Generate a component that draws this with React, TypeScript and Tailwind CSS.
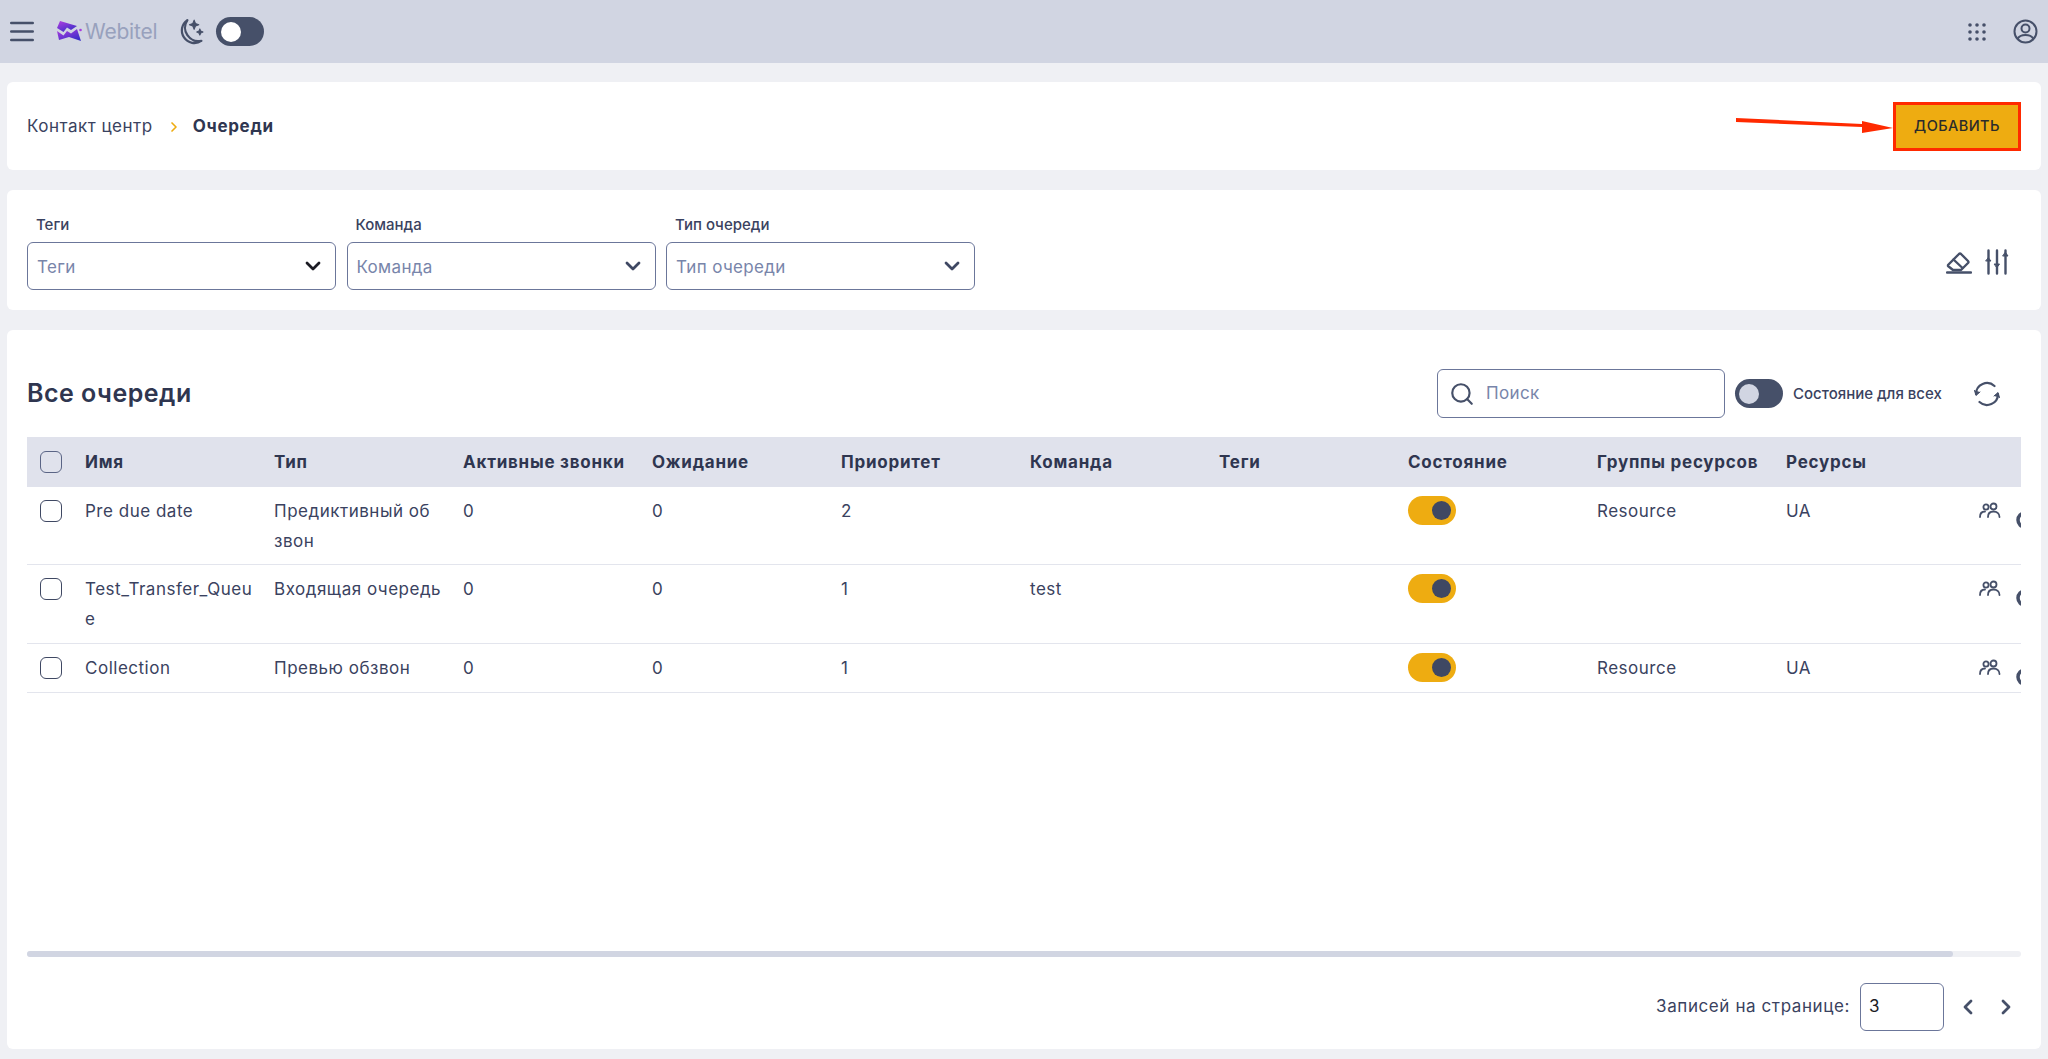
import React from "react";
import { ChevronDown, ChevronLeft, ChevronRight, Search } from "lucide-react";

const font = { fontFamily: "Inter, 'Noto Sans', sans-serif" };

function Toggle({ kind }: { kind: "dark" | "darkMuted" | "yellow" }) {
  if (kind === "yellow")
    return (
      <div className="flex h-[29px] w-[48px] items-center justify-end rounded-full bg-[#eeac11] pr-[5px]">
        <div className="h-[19px] w-[19px] rounded-full bg-[#3f4863]" />
      </div>
    );
  return (
    <div className={`flex items-center rounded-full bg-[#465069] ${kind === "dark" ? "h-[29px] w-[48px] pl-[5px]" : "h-[29px] w-[48px] pl-[4px]"}`}>
      <div className={`h-[20px] w-[20px] rounded-full ${kind === "dark" ? "bg-white" : "bg-[#d1d5e2]"}`} />
    </div>
  );
}

function Field({ label, chevron }: { label: string; chevron: string }) {
  return (
    <div className="flex w-[309px] flex-col">
      <div className="h-[35px] pl-[9px] pt-[25px] text-[15px] font-medium leading-[20px] text-[#3a4260]">{label}</div>
      <div className="mt-[17px] flex h-[48px] items-center justify-between rounded-[6px] border border-[#6b769a] pl-[9px] pr-[10px] text-[17px] tracking-[0.02em] text-[#7885aa]">
        <span className="pt-[3px]">{label}</span>
        <ChevronDown size={24} strokeWidth={2.8} color={chevron} />
      </div>
    </div>
  );
}

function Checkbox({ muted }: { muted?: boolean }) {
  return <div className={`h-[22px] w-[22px] rounded-[6px] border-[1.5px] ${muted ? "border-[#5a6485]" : "border-[#3f4863]"}`} />;
}

function UsersIcon() {
  return (
    <svg width="22" height="18" viewBox="0 0 22 18" fill="none" stroke="#465069" strokeWidth="1.8" strokeLinecap="round">
      <circle cx="7" cy="5" r="2.6" />
      <circle cx="14.5" cy="4.5" r="3" />
      <path d="M1 15c0-3.4 2-5.5 5-5.5" />
      <path d="M9 15c0-3.4 2.2-5.5 5.500-5.500S20.500 11.600 20.500 15" />
    </svg>
  );
}

const cols = "grid grid-cols-[58px_repeat(10,189px)_46px]";

const rows = [
  { name: ["Pre due date"], type: ["Предиктивный об", "звон"], wait: "0", pr: "2", team: "", res: "Resource", ua: "UA", h: "h-[78px]" },
  { name: ["Test_Transfer_Queu", "e"], type: ["Входящая очередь"], wait: "0", pr: "1", team: "test", res: "", ua: "", h: "h-[79px]" },
  { name: ["Collection"], type: ["Превью обзвон"], wait: "0", pr: "1", team: "", res: "Resource", ua: "UA", h: "h-[49px]" },
];

const heads = ["Имя", "Тип", "Активные звонки", "Ожидание", "Приоритет", "Команда", "Теги", "Состояние", "Группы ресурсов", "Ресурсы"];

function Lines({ l }: { l: string[] }) {
  return (
    <div className="whitespace-nowrap">
      {l.map((t) => (
        <div key={t}>{t}</div>
      ))}
    </div>
  );
}

export default function App() {
  return (
    <div style={font} className="relative flex h-[1059px] w-[2048px] flex-col overflow-hidden bg-[#eff0f4] text-[#3a4260]">
      <header className="flex h-[63px] shrink-0 items-center justify-between bg-[#d1d5e2] pl-[10px] pr-[10px]">
        <div className="flex items-center">
          <svg width="24" height="21" viewBox="0 0 24 21" stroke="#465069" strokeWidth="2.4" strokeLinecap="round">
            <path d="M1.200 2h21.600M1.200 10.500h21.600M1.200 19h21.600" />
          </svg>
          <svg className="ml-[22px]" width="26" height="21" viewBox="0 0 26 21">
            <defs>
              <linearGradient id="lg" x1="0" y1="0" x2="0.7" y2="1">
                <stop offset="0" stopColor="#b23fe0" />
                <stop offset="1" stopColor="#3a2ec8" />
              </linearGradient>
            </defs>
            <path d="M4 0 L21 5 L15 9 L11 6.500 L7.500 11 L1 7 Z" fill="url(#lg)" />
            <path d="M1 10 L7.500 14.500 L11 10 L15 12.500 L21 8 L25 20 L13 16 L3 19 Z" fill="url(#lg)" />
            <circle cx="24.500" cy="9" r="1.300" fill="#a93ae0" />
          </svg>
          <span className="ml-[3px] text-[21px] leading-none tracking-[-0.01em] text-[#98a1bd]">Webitel</span>
          <svg className="ml-[20px]" width="27" height="27" viewBox="0 0 26 26" fill="none" stroke="#465069" strokeWidth="2.200" strokeLinecap="round" strokeLinejoin="round">
            <path d="M10 2A12 12 0 1 0 23.500 22 A13 13 0 0 1 10 2Z" />
            <path d="M16.500 2l1.300 3.300 3.200 1.200-3.200 1.200-1.300 3.300-1.300-3.300-3.200-1.200 3.200-1.200Z" fill="#465069" strokeWidth="1" />
            <path d="M22 10.500l.9 2.100 2.100.9-2.100.9-.9 2.100-.9-2.100-2.100-.9 2.100-.9Z" fill="#465069" strokeWidth="1" />
          </svg>
          <div className="ml-[12px]">
            <Toggle kind="dark" />
          </div>
        </div>
        <div className="flex items-center gap-[27px]">
          <svg width="18" height="18" viewBox="0 0 18 18" fill="#465069">
            {[2, 9, 16].flatMap((y) => [2, 9, 16].map((x) => <circle key={`${x}-${y}`} cx={x} cy={y} r="1.800" />))}
          </svg>
          <svg width="25" height="25" viewBox="0 0 25 25" fill="none" stroke="#465069" strokeWidth="2">
            <circle cx="12.500" cy="12.500" r="11" />
            <circle cx="12.500" cy="9.500" r="4" />
            <path d="M4.500 20c1.500-3 4.500-4 8-4s6.500 1 8 4" />
          </svg>
        </div>
      </header>

      <main className="flex flex-1 flex-col gap-[20px] px-[7px] pb-[10px] pt-[19px]">
        <section className="relative flex h-[88px] shrink-0 items-center justify-between rounded-[6px] bg-white pl-[20px] pr-[20px]">
          <div className="flex items-center pt-[2px] text-[17px] tracking-[0.03em]">
            <span>Контакт центр</span>
            <ChevronRight className="ml-[13px] mr-[11px]" size={16} strokeWidth={2.5} color="#eeac11" />
            <span className="font-bold tracking-[0.04em] text-[#2f3650]">Очереди</span>
          </div>
          <button className="flex h-[49px] w-[128px] items-center justify-center border-[3px] border-[#ff2a00] bg-[#eeac11] text-[14.500px] font-medium tracking-[0.03em] text-[#2b2b2b]">
            ДОБАВИТЬ
          </button>
          <svg className="absolute left-[1729px] top-[30px]" width="158" height="24" viewBox="0 0 158 24" fill="#ff2a00">
            <path d="M0 6 L126 12 L126 9 L157 16 L126 21 L126 15 L0 10 Z" />
          </svg>
        </section>

        <section className="flex h-[120px] shrink-0 justify-between rounded-[6px] bg-white px-[20px]">
          <div className="flex gap-[10.500px]">
            <Field label="Теги" chevron="#1c1c24" />
            <Field label="Команда" chevron="#3f4863" />
            <Field label="Тип очереди" chevron="#3f4863" />
          </div>
          <div className="flex items-center gap-[13px] pr-[12px] pt-[24px]">
            <svg width="26" height="24" viewBox="0 0 26 24" fill="none" stroke="#465069" strokeWidth="2.400" strokeLinejoin="round" strokeLinecap="round">
              <path d="M2 15 L13 4 a1.500 1.500 0 0 1 2 0 L22 11 a1.500 1.500 0 0 1 0 2 L15 20 H7 L2 16 Z" />
              <path d="M7.500 9.500 L16.500 18" />
              <path d="M1 22.500 H25" />
            </svg>
            <svg width="24" height="26" viewBox="0 0 24 26" fill="#465069" stroke="#465069" strokeWidth="2.400" strokeLinecap="round">
              <path d="M3.500 1.500v23M12 1.500v23M20.500 1.500v23" />
              <path d="M1 12h5l-2.500-3z" strokeWidth="1" />
              <path d="M9.500 15h5l-2.500 3.500z" strokeWidth="1" />
              <path d="M18 7h5l-2.500-3.500z" strokeWidth="1" />
            </svg>
          </div>
        </section>

        <section className="flex min-h-0 flex-1 flex-col rounded-[6px] bg-white px-[20px]">
          <div className="flex h-[107px] shrink-0 items-center justify-between pt-[20px]">
            <h1 className="text-[25px] font-semibold tracking-[0.02em] text-[#2f3650]">Все очереди</h1>
            <div className="flex items-center">
              <div className="flex h-[49px] w-[288px] items-center rounded-[6px] border border-[#6b769a] pl-[11px]">
                <Search size={26} strokeWidth={2} color="#465069" />
                <span className="ml-[11px] text-[17px] tracking-[0.02em] text-[#7885aa]">Поиск</span>
              </div>
              <div className="ml-[10px]">
                <Toggle kind="darkMuted" />
              </div>
              <span className="ml-[10px] w-[150px] whitespace-nowrap text-[15px] font-medium leading-none text-[#3a4260]">Состояние для всех</span>
              <svg className="ml-[30px] mr-[20px]" width="28" height="28" viewBox="0 0 28 28" fill="none" stroke="#465069" strokeWidth="2.200" strokeLinecap="round">
                <path d="M3 14A11 11 0 0 1 21.500 6" />
                <path d="M25 14A11 11 0 0 1 6.500 22" />
                <path d="M1.500 10.500 L3 15.500 L7 12" fill="#465069" strokeWidth="1" />
                <path d="M26.500 17.500 L25 12.500 L21 16" fill="#465069" strokeWidth="1" />
              </svg>
            </div>
          </div>

          <div className="min-h-0 flex-1 overflow-hidden text-[17px] leading-[30px] tracking-[0.03em]">
            <div className={`${cols} h-[50px] items-center bg-[#e0e2ec] font-bold text-[#2f3650]`}>
              <div className="pl-[13px]">
                <Checkbox muted />
              </div>
              {heads.map((h) => (
                <div key={h} className="whitespace-nowrap tracking-[0.045em]">
                  {h}
                </div>
              ))}
              <div />
            </div>
            {rows.map((r, i) => (
              <div key={i} className={`${cols} ${r.h} border-b-[1.5px] border-[#e3e5ed] pt-[9px]`}>
                <div className="pl-[13px] pt-[4px]">
                  <Checkbox />
                </div>
                <Lines l={r.name} />
                <Lines l={r.type} />
                <div>0</div>
                <div>{r.wait}</div>
                <div>{r.pr}</div>
                <div>{r.team}</div>
                <div />
                <div>
                  <Toggle kind="yellow" />
                </div>
                <div>{r.res}</div>
                <div>{r.ua}</div>
                <div className="flex items-start overflow-hidden pl-[4px]">
                  <span className="mt-[6px] shrink-0">
                    <UsersIcon />
                  </span>
                  <svg className="ml-[14px] mt-[14px] shrink-0" width="20" height="20" viewBox="0 0 20 20" fill="none" stroke="#465069" strokeWidth="3.500">
                    <circle cx="10" cy="10" r="7" />
                  </svg>
                </div>
              </div>
            ))}
          </div>

          <div className="h-[6px] shrink-0 rounded-full bg-[#eff0f4]">
            <div className="h-full w-[1926px] rounded-full bg-[#d1d5e2]" />
          </div>
          <div className="flex h-[92px] shrink-0 items-center justify-end pt-[8px]">
            <span className="text-[17px] tracking-[0.035em] text-[#3a4260]">Записей на странице:</span>
            <div className="ml-[10px] flex h-[48px] w-[84px] items-center rounded-[6px] border border-[#6b769a] pl-[8px] text-[17px] text-[#1c1c24]">3</div>
            <ChevronLeft className="ml-[12px]" size={24} strokeWidth={2.8} color="#465069" />
            <ChevronRight className="ml-[14px] mr-[3px]" size={24} strokeWidth={2.8} color="#465069" />
          </div>
        </section>
      </main>
    </div>
  );
}
